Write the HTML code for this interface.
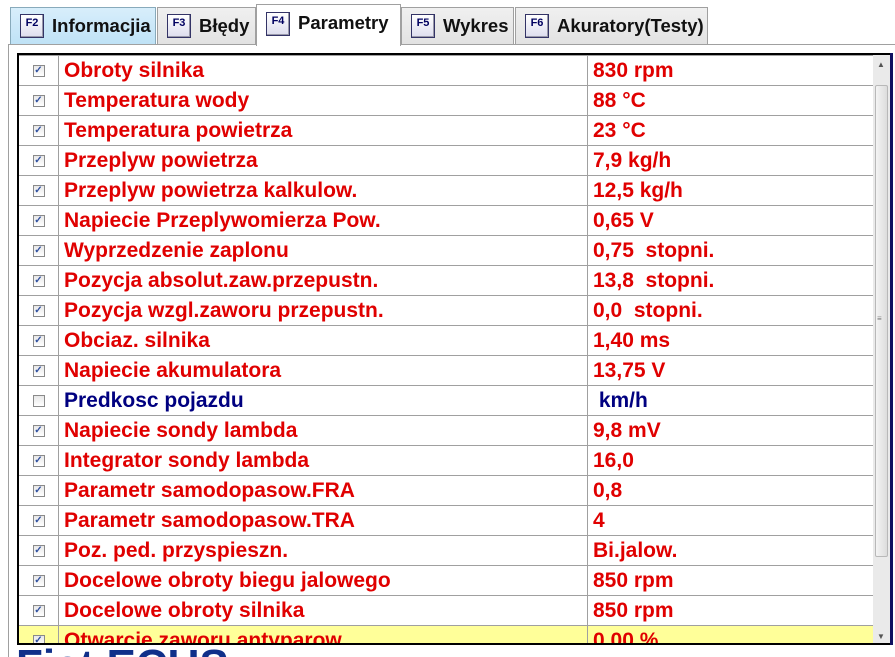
<!DOCTYPE html>
<html><head><meta charset="utf-8"><style>
*{margin:0;padding:0;box-sizing:border-box}
html,body{width:895px;height:657px;overflow:hidden}
body{background:#fff;font-family:"Liberation Sans",Arial,sans-serif;position:relative}
.tab{position:absolute;border:1px solid #a0a0a0;background:linear-gradient(#f0f0f0,#e2e2e2);font-weight:bold;font-size:18.5px;color:#111;display:flex;align-items:center}
.tab .k{width:24px;height:24px;border:1px solid #333366;background:linear-gradient(#fff,#dde);font-size:11px;color:#000060;display:flex;align-items:flex-start;justify-content:center;padding-top:2px;margin:0 8px 0 9px;box-shadow:inset -1px -1px 0 #99a}
.line{position:absolute;background:#a0a0a0}
.wrap{position:absolute;left:17px;top:53px;width:857px;height:592px;border:2px solid #000;border-right:none;overflow:hidden}
.wrap table{left:-1px;top:0;position:absolute;width:856px;border-collapse:collapse}
td{height:30px;border:1px solid #a0a0a0;font-weight:bold;font-size:21px;color:#e00000;padding:0 0 0 5px;white-space:nowrap;line-height:28px}
td.c{width:40px;padding:0;text-align:center}
td.n{width:529px}
.cb{display:inline-block;width:12px;height:12px;border:1px solid #8a8a8a;background:linear-gradient(#e8e8e8,#fff);font-size:10px;line-height:10px;color:#3050a0;vertical-align:middle}
tr.b td{color:#000080}
tr.y td{background:#ffff99}
</style></head><body>
<div class="tab" style="left:10px;top:7px;width:146px;height:38px;background:linear-gradient(#d8eefb,#bfe2f6);border-color:#8ab"><span class="k">F2</span>Informacjia</div>
<div class="tab" style="left:157px;top:7px;width:99px;height:38px"><span class="k">F3</span>Błędy</div>
<div class="tab" style="left:401px;top:7px;width:113px;height:38px"><span class="k">F5</span>Wykres</div>
<div class="tab" style="left:515px;top:7px;width:193px;height:38px"><span class="k">F6</span>Akuratory(Testy)</div>
<div class="line" style="left:8px;top:44px;width:887px;height:1px"></div>
<div class="line" style="left:8px;top:44px;width:1px;height:613px"></div>
<div class="tab" style="left:256px;top:4px;width:145px;height:42px;background:#fff;border-bottom:none;align-items:flex-start;padding-top:7px"><span class="k">F4</span>Parametry</div>
<div class="wrap"><table>
<tr><td class="c"><span class="cb">✓</span></td><td class="n">Obroty silnika</td><td>830 rpm</td></tr>
<tr><td class="c"><span class="cb">✓</span></td><td class="n">Temperatura wody</td><td>88 °C</td></tr>
<tr><td class="c"><span class="cb">✓</span></td><td class="n">Temperatura powietrza</td><td>23 °C</td></tr>
<tr><td class="c"><span class="cb">✓</span></td><td class="n">Przeplyw powietrza</td><td>7,9 kg/h</td></tr>
<tr><td class="c"><span class="cb">✓</span></td><td class="n">Przeplyw powietrza kalkulow.</td><td>12,5 kg/h</td></tr>
<tr><td class="c"><span class="cb">✓</span></td><td class="n">Napiecie Przeplywomierza Pow.</td><td>0,65 V</td></tr>
<tr><td class="c"><span class="cb">✓</span></td><td class="n">Wyprzedzenie zaplonu</td><td>0,75&nbsp; stopni.</td></tr>
<tr><td class="c"><span class="cb">✓</span></td><td class="n">Pozycja absolut.zaw.przepustn.</td><td>13,8&nbsp; stopni.</td></tr>
<tr><td class="c"><span class="cb">✓</span></td><td class="n">Pozycja wzgl.zaworu przepustn.</td><td>0,0&nbsp; stopni.</td></tr>
<tr><td class="c"><span class="cb">✓</span></td><td class="n">Obciaz. silnika</td><td>1,40 ms</td></tr>
<tr><td class="c"><span class="cb">✓</span></td><td class="n">Napiecie akumulatora</td><td>13,75 V</td></tr>
<tr class="b"><td class="c"><span class="cb"></span></td><td class="n">Predkosc pojazdu</td><td>&nbsp;km/h</td></tr>
<tr><td class="c"><span class="cb">✓</span></td><td class="n">Napiecie sondy lambda</td><td>9,8 mV</td></tr>
<tr><td class="c"><span class="cb">✓</span></td><td class="n">Integrator sondy lambda</td><td>16,0</td></tr>
<tr><td class="c"><span class="cb">✓</span></td><td class="n">Parametr samodopasow.FRA</td><td>0,8</td></tr>
<tr><td class="c"><span class="cb">✓</span></td><td class="n">Parametr samodopasow.TRA</td><td>4</td></tr>
<tr><td class="c"><span class="cb">✓</span></td><td class="n">Poz. ped. przyspieszn.</td><td>Bi.jalow.</td></tr>
<tr><td class="c"><span class="cb">✓</span></td><td class="n">Docelowe obroty biegu jalowego</td><td>850 rpm</td></tr>
<tr><td class="c"><span class="cb">✓</span></td><td class="n">Docelowe obroty silnika</td><td>850 rpm</td></tr>
<tr class="y"><td class="c"><span class="cb">✓</span></td><td class="n">Otwarcie zaworu antyparow.</td><td>0,00 %</td></tr>
</table></div>
<div style="position:absolute;left:873px;top:53px;width:17px;height:592px;background:#eaeaea;border-top:2px solid #000;border-bottom:2px solid #000"></div>
<div style="position:absolute;left:875px;top:85px;width:13px;height:472px;background:linear-gradient(90deg,#f4f4f4,#dcdcdc);border:1px solid #b8b8b8;border-radius:2px"></div>
<div style="position:absolute;left:877px;top:60px;font-size:8px;color:#555">▲</div>
<div style="position:absolute;left:877px;top:632px;font-size:8px;color:#555">▼</div>
<div style="position:absolute;left:877px;top:314px;font-size:8px;color:#777">≡</div>
<div style="position:absolute;left:890px;top:53px;width:3px;height:592px;background:#101060"></div>
<div style="position:absolute;left:16px;top:644px;font-size:44px;font-weight:bold;color:#10308a;line-height:44px">Fiat ECUS</div>
</body></html>
